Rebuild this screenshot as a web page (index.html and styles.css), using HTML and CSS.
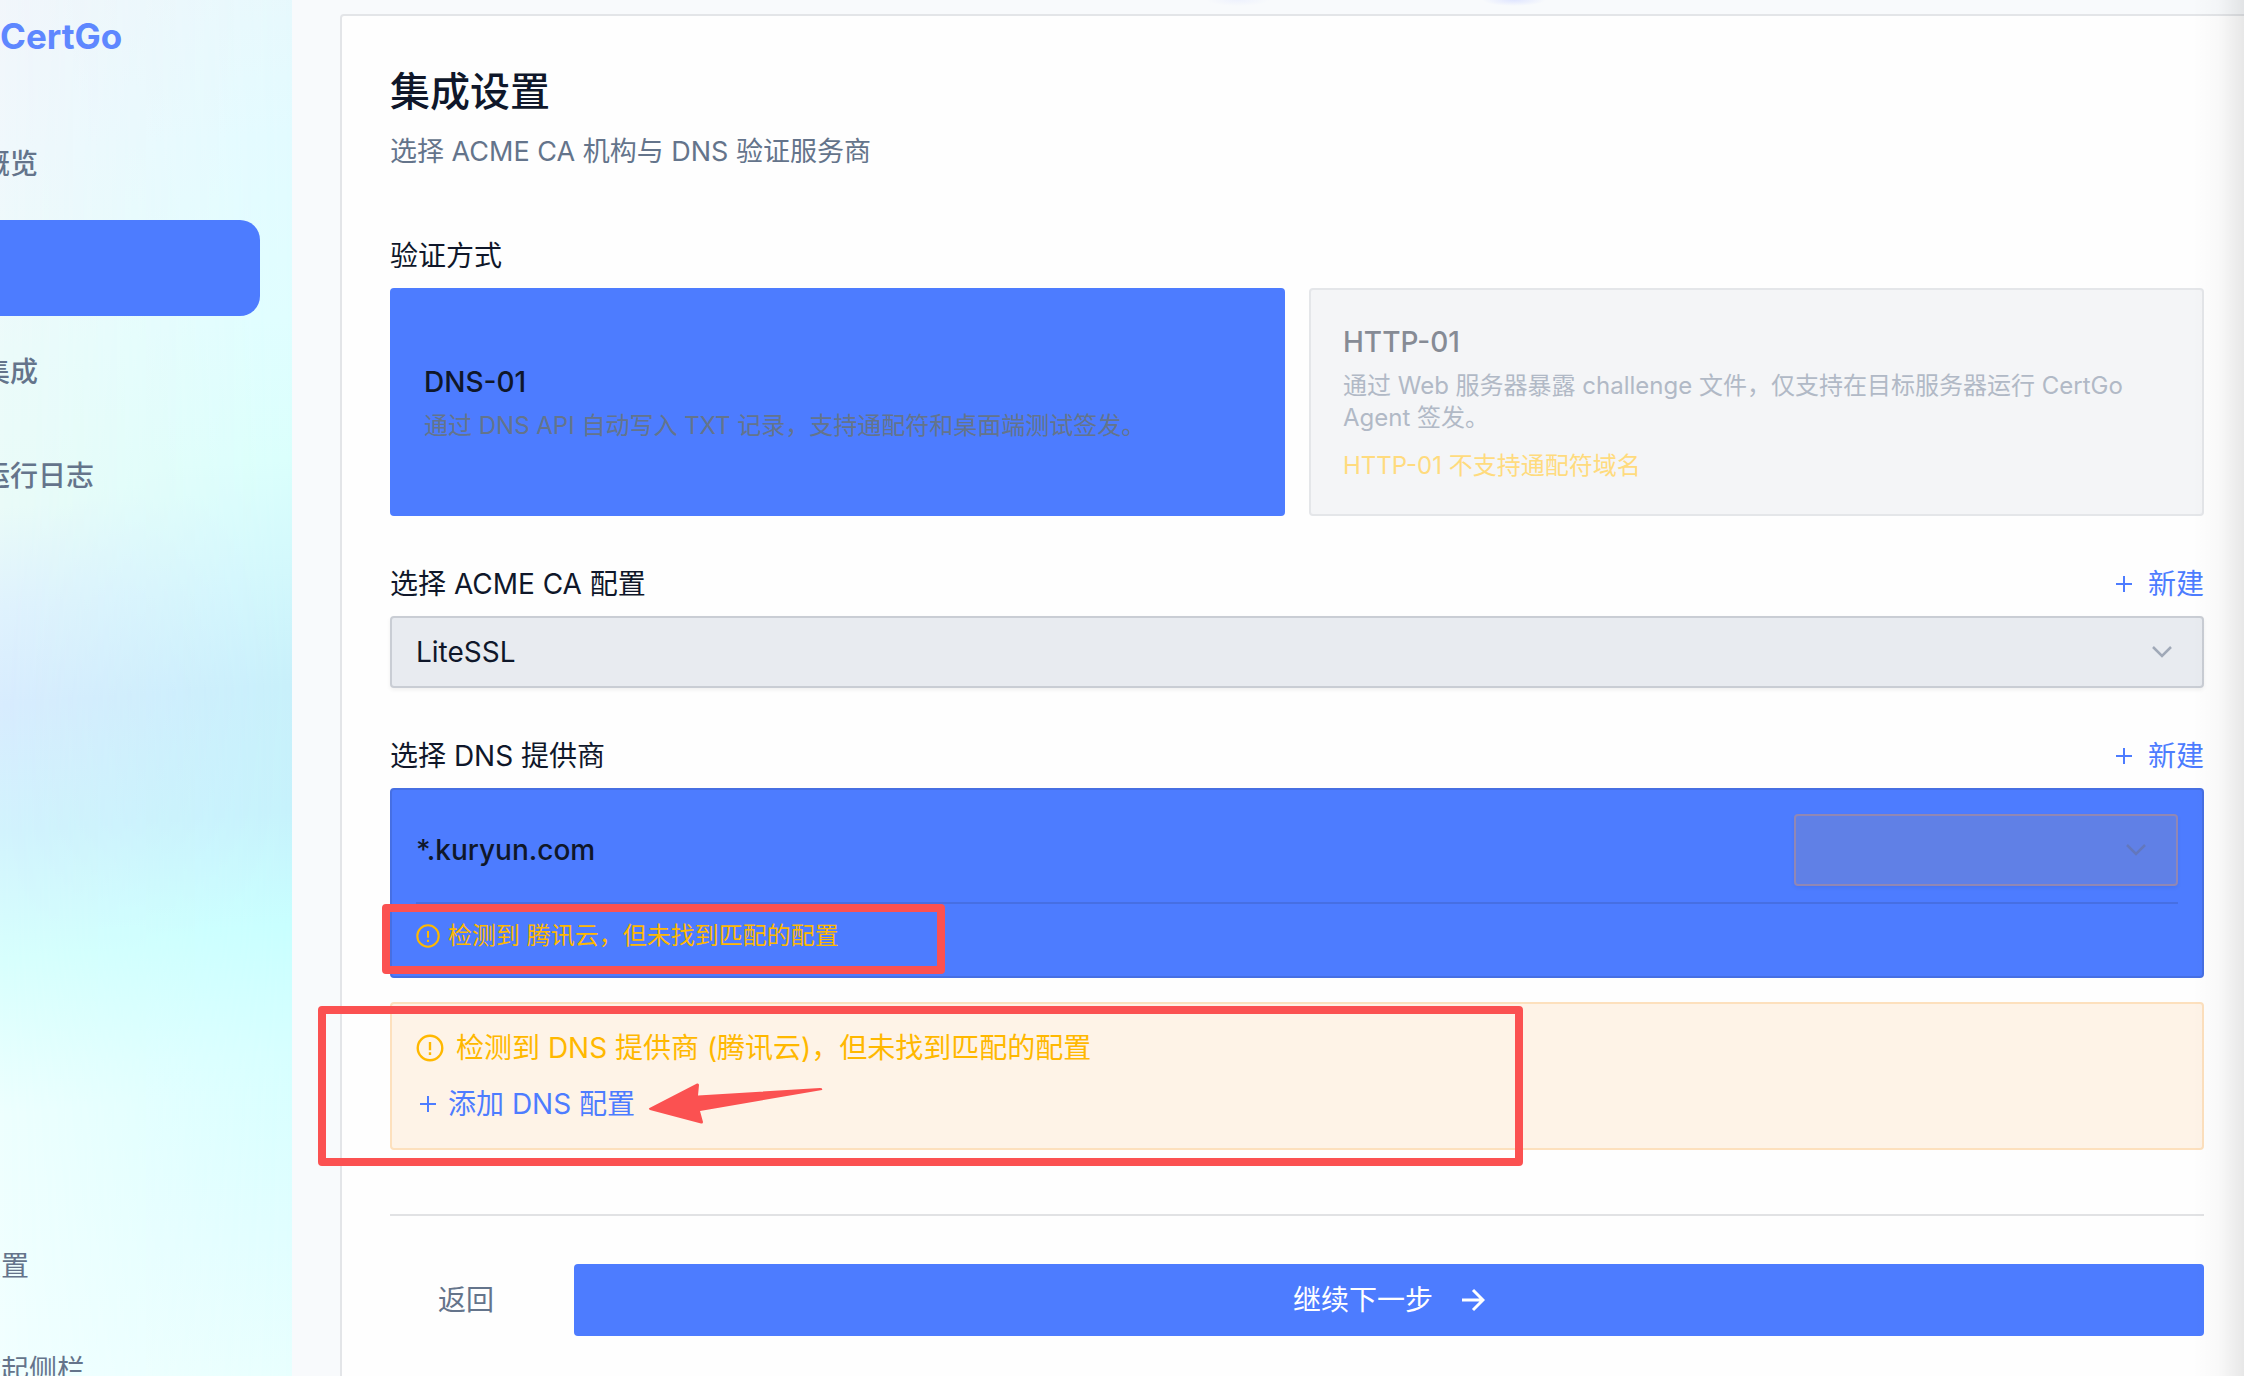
FILE: index.html
```html
<!DOCTYPE html>
<html lang="zh-CN">
<head>
<meta charset="utf-8">
<title>CertGo</title>
<link rel="stylesheet" href="styles.css">
</head>
<body>
<div class="app">
  <aside class="sidebar">
    <div class="brand">CertGo</div>
    <nav class="nav">
      <a class="nav-item" href="#">概览</a>
      <a class="nav-item active" href="#" aria-current="page" aria-label="证书"></a>
      <a class="nav-item" href="#">集成</a>
      <a class="nav-item" href="#">运行日志</a>
    </nav>
    <div class="nav nav-bottom">
      <a class="nav-item" href="#">设置</a>
      <button class="nav-item" type="button">收起侧栏</button>
    </div>
  </aside>
  <main class="main">
    <div class="steps-glow"><span class="glow glow-soft"></span><span class="glow"></span></div>
    <section class="card">
      <header class="card-head">
        <h1>集成设置</h1>
        <p>选择 ACME CA 机构与 DNS 验证服务商</p>
      </header>

      <div class="field">
        <div class="label-row"><span class="label">验证方式</span></div>
        <div class="methods">
          <button class="method selected" type="button">
            <span class="method-title">DNS-01</span>
            <span class="method-desc">通过 DNS API 自动写入 TXT 记录，支持通配符和桌面端测试签发。</span>
          </button>
          <button class="method disabled" type="button" disabled>
            <span class="method-title">HTTP-01</span>
            <span class="method-desc">通过 Web 服务器暴露 challenge 文件，仅支持在目标服务器运行 CertGo Agent 签发。</span>
            <span class="method-warn">HTTP-01 不支持通配符域名</span>
          </button>
        </div>
      </div>

      <div class="field">
        <div class="label-row">
          <label class="label" for="ca">选择 ACME CA 配置</label>
          <button class="link-btn" type="button"><svg class="plus" viewBox="0 0 16 16"><path d="M8 0v16M0 8h16"/></svg>新建</button>
        </div>
        <div class="select-wrap">
          <select class="select" id="ca"><option>LiteSSL</option></select>
          <svg class="chevron" viewBox="0 0 20 12"><path d="M1 1l9 9 9-9"/></svg>
        </div>
      </div>

      <div class="field">
        <div class="label-row">
          <label class="label" for="dns">选择 DNS 提供商</label>
          <button class="link-btn" type="button"><svg class="plus" viewBox="0 0 16 16"><path d="M8 0v16M0 8h16"/></svg>新建</button>
        </div>
        <div class="domain-box">
          <div class="domain-row">
            <span class="domain">*.kuryun.com</span>
            <div class="select-wrap small">
              <select class="select" id="dns"><option></option></select>
              <svg class="chevron" viewBox="0 0 20 12"><path d="M1 1l9 9 9-9"/></svg>
            </div>
          </div>
          <div class="domain-warn">
            <svg class="info info-sm" viewBox="0 0 26 26"><circle cx="13" cy="13" r="11.6"/><path d="M13 7.5v7.5M13 17v2.4"/></svg>
            <span>检测到 腾讯云，但未找到匹配的配置</span>
            <span class="mark mark-small"></span>
          </div>
        </div>
        <div class="alert">
          <div class="alert-text">
            <svg class="info" viewBox="0 0 26 26"><circle cx="13" cy="13" r="11.4"/><path d="M13 7.5v7.5M13 17v2.4"/></svg>
            <span>检测到 DNS 提供商 (腾讯云)，但未找到匹配的配置</span>
          </div>
          <button class="link-btn add" type="button"><svg class="plus" viewBox="0 0 16 16"><path d="M8 0v16M0 8h16"/></svg>添加 DNS 配置</button>
          <span class="mark mark-large"></span>
          <svg class="arrow" viewBox="0 0 176 44"><path d="M1.5 26 L49 1.5 Q51 1 51 3 L50 13.5 L172 6 Q175 6 174 8 L52 29 L55 40 Q55 42 53 41.5 L2 28 Q0 27 1.5 26 Z"/></svg>
        </div>
      </div>

      <footer class="actions">
        <button class="btn back" type="button">返回</button>
        <button class="btn next" type="button">继续下一步<svg class="next-icon" viewBox="0 0 24 24"><path d="M1 12h21M12 2l10 10-10 10"/></svg></button>
      </footer>
    </section>
  </main>
  <div class="edge"></div>
</div>
</body>
</html>
```
FILE: styles.css
```css
* { box-sizing: border-box; }
:root {
  --blue: #4d7cff;
  --ink: #0f172a;
  --muted: #64748b;
  --warn: #ffb800;
  --mark: #fb5151;
}
body {
  margin: 0;
  overflow: hidden;
  background: #f8fafc;
  color: var(--ink);
  font: 28px/40px Inter, "Noto Sans CJK SC", sans-serif;
}
button, select { font: inherit; color: inherit; }
button { border: 0; background: none; padding: 0; cursor: pointer; text-align: left; }
svg { fill: none; stroke: currentColor; flex: none; display: block; }

.app {
  position: relative;
  display: flex;
  height: 100vh;
  margin-left: -220px;
}

/* sidebar */
.sidebar {
  position: relative;
  isolation: isolate;
  flex: none;
  width: 512px;
  display: flex;
  flex-direction: column;
  overflow: hidden;
  background: linear-gradient(176deg, #f2f6fb 0%, #f0f8fc 12%, #ecfbfa 26%, #eafbf8 37%, #e0f2fd 44%, #d8ecfe 51%, #d2f3fd 60%, #d8fffd 69%, #eefffe 80%, #f2ffff 100%);
}
.sidebar::before {
  content: "";
  position: absolute;
  inset: 0;
  z-index: -1;
  background: linear-gradient(176deg, #e8f8fc 0%, #e2fbff 12%, #dffeff 25%, #dafffc 35%, #d2f8fc 43%, #c8f0fb 51%, #c6f2fc 60%, #c8ffff 68%, #d6ffff 77%, #e0feff 90%, #e8fffe 100%);
  mask-image: linear-gradient(90deg, transparent 43%, #000);
}
.brand {
  padding: 12px 0 0 220px;
  height: 116px;
  font-size: 35px;
  line-height: 48px;
  font-weight: 700;
  color: #5e87ff;
}
.nav {
  display: flex;
  flex-direction: column;
  gap: 8px;
  padding: 0 32px;
}
.nav-item {
  height: 96px;
  padding-left: 170px;
  border-radius: 20px;
  line-height: 96px;
  color: var(--muted);
  font-weight: 500;
  text-decoration: none;
  white-space: nowrap;
}
.nav-item.active { background: var(--blue); }
.nav-bottom { margin-top: auto; margin-bottom: -42px; }
.nav-bottom .nav-item { padding-left: 161px; font-weight: 400; }

/* main card */
.main {
  flex: 1;
  min-width: 0;
  padding-left: 48px;
  margin-right: -10px;
}
.steps-glow {
  display: flex;
  justify-content: center;
  gap: 212px;
  height: 14px;
  padding-left: 158px;
  overflow: hidden;
}
.glow { width: 64px; height: 6px; background: radial-gradient(ellipse at 50% 0, #dfe5ff, transparent 70%); }
.glow-soft { opacity: .4; }
.card {
  border: 2px solid #e3e5e8;
  border-radius: 4px;
  background: #fefefe;
  padding: 48px;
  height: 100%;
}
.card-head { margin-bottom: 64px; }
h1 { margin: 0 0 12px; font-size: 40px; line-height: 56px; font-weight: 500; }
p { margin: 0; font-size: 27px; color: var(--muted); }
.field { margin-bottom: 48px; }
.label-row { display: flex; justify-content: space-between; margin-bottom: 12px; }
.link-btn { display: flex; align-items: center; gap: 16px; color: var(--blue); }
.plus { width: 16px; height: 16px; stroke-width: 2; }

.methods { display: grid; grid-template-columns: 1fr 1fr; gap: 24px; }
.method {
  display: flex;
  flex-direction: column;
  justify-content: center;
  padding: 32px;
  border: 2px solid #e4e6e9;
  border-radius: 4px;
}
.method-title { font-weight: 500; margin-bottom: 8px; }
.method-desc, .method-warn { font-size: 24px; line-height: 32px; color: var(--muted); }
.method-warn { margin-top: 16px; }
.selected { background: var(--blue); border-color: var(--blue); }
.disabled { background: #f4f5f7; cursor: default; }
.disabled .method-title { color: #868b95; }
.disabled .method-desc { color: #b1b9c6; }
.disabled .method-warn { color: #ffdb7e; }

.select-wrap { display: grid; align-items: center; color: #a0a9b8; }
.select-wrap > * { grid-area: 1 / 1; }
.select {
  appearance: none;
  width: 100%;
  height: 72px;
  padding: 0 24px;
  border: 2px solid #c9cdd4;
  border-radius: 4px;
  background: #e8ebf0;
  color: var(--ink);
  box-shadow: 0 2px 4px rgba(0, 0, 0, .06);
}
.chevron { width: 20px; height: 12px; justify-self: end; margin-right: 32px; stroke-width: 2.5; pointer-events: none; }

.domain-box {
  padding: 24px;
  border: 2px solid #466fe3;
  border-radius: 4px;
  background: var(--blue);
}
.domain-row { display: flex; align-items: center; justify-content: space-between; padding-bottom: 16px; }
.domain { font-weight: 500; }
.small { width: 384px; color: #6377bd; }
.small .select { background: #6080e6; border-color: #9187b4; }
.domain-warn {
  position: relative;
  display: flex;
  align-items: center;
  gap: 8px;
  padding-top: 16px;
  border-top: 2px solid #466fe3;
  font-size: 24px;
  line-height: 32px;
  color: var(--warn);
}
.info { width: 28px; height: 28px; stroke-width: 2.2; }
.info-sm { width: 24px; height: 24px; }

.alert {
  position: relative;
  display: flex;
  flex-direction: column;
  align-items: flex-start;
  gap: 16px;
  margin-top: 24px;
  padding: 24px;
  border: 2px solid #fde0bd;
  border-radius: 4px;
  background: #fef3e7;
}
.alert-text { display: flex; align-items: center; gap: 12px; color: var(--warn); }
.add { gap: 12px; padding-left: 4px; }

/* hand-drawn marks laid over the form */
.mark { position: absolute; border: 8px solid var(--mark); border-radius: 4px; }
.mark-small { left: -34px; top: 0; width: 563px; height: 70px; }
.mark-large { left: -74px; top: 2px; width: 1205px; height: 160px; }
.arrow { position: absolute; left: 256px; top: 78px; width: 176px; height: 44px; fill: var(--mark); stroke: none; }

.actions {
  display: flex;
  gap: 32px;
  margin-top: 64px;
  padding-top: 48px;
  border-top: 2px solid #e1e2e4;
}
.btn { height: 72px; border-radius: 4px; }
.back { padding: 0 48px; color: var(--muted); }
.next {
  flex: 1;
  display: flex;
  align-items: center;
  justify-content: center;
  gap: 28px;
  background: var(--blue);
  color: #fff;
}
.next-icon { width: 24px; height: 24px; stroke-width: 3; }
.edge {
  position: absolute;
  top: 0;
  right: 0;
  bottom: 0;
  width: 52px;
  background: linear-gradient(90deg, transparent, rgba(0, 0, 0, .02) 50%, rgba(0, 0, 0, .09));
  pointer-events: none;
}
```
